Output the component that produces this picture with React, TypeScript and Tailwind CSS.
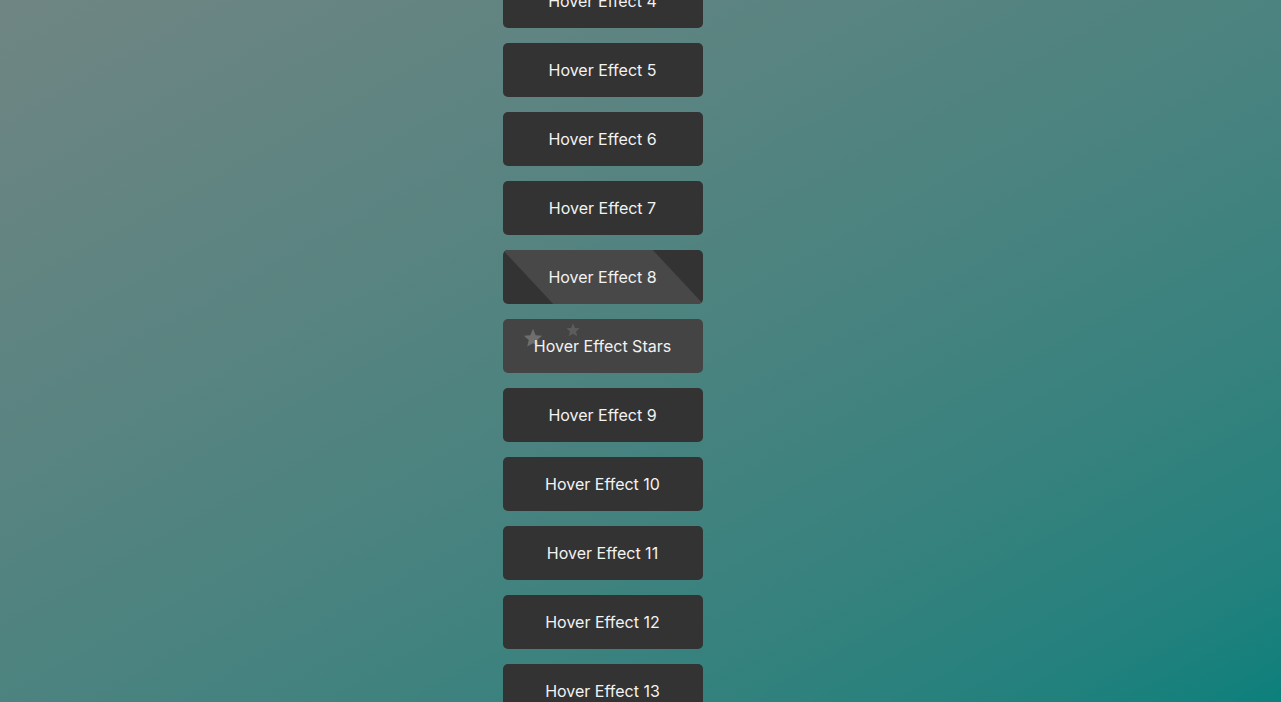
import React from 'react';

const labels = [
    'Hover Effect 4',
    'Hover Effect 5',
    'Hover Effect 6',
    'Hover Effect 7',
    'Hover Effect 8',
    'Hover Effect Stars',
    'Hover Effect 9',
    'Hover Effect 10',
    'Hover Effect 11',
    'Hover Effect 12',
    'Hover Effect 13',
];

const Star: React.FC<{ size: number; className?: string }> = ({ size, className }) => (
    <svg width={size} height={size} viewBox="0 0 24 24" className={className}>
        <path d="M12 2l2.9 6.9 7.1.6-5.4 4.7 1.7 7.1L12 17.6 5.7 21.3l1.7-7.1L2 9.5l7.1-.6z" fill="currentColor" />
    </svg>
);

const HoverButton: React.FC<{ label: string }> = ({ label }) => {
    if (label === 'Hover Effect 8') {
        return (
            <button className="relative flex h-[54px] w-[200px] items-center justify-center overflow-hidden rounded-[5px] bg-[#333333] text-[16px] text-[#f2f2f2]">
                {/* diagonal band */}
                <span className="absolute inset-y-0 left-[25px] w-[150px] skew-x-[43deg] bg-[#484848]" />
                <span className="relative">{label}</span>
            </button>
        );
    }
    if (label === 'Hover Effect Stars') {
        return (
            <button className="relative flex h-[54px] w-[200px] items-center justify-center overflow-hidden rounded-[5px] bg-[#444444] text-[16px] text-[#f2f2f2]">
                <Star size={22} className="absolute top-[8px] left-[19px] text-[#6e6e6e]" />
                <Star size={16} className="absolute top-[3px] left-[62px] text-[#5c5c5c]" />
                <span className="relative">{label}</span>
            </button>
        );
    }
    return (
        <button className="flex h-[54px] w-[200px] items-center justify-center rounded-[5px] bg-[#333333] text-[16px] text-[#f2f2f2]">
            {label}
        </button>
    );
};

export default function App() {
    return (
        <div
            className="h-[702px] overflow-hidden bg-gradient-to-br from-[#6f8583] to-[#0b807c]"
            style={{ fontFamily: 'Inter, "Open Sans", sans-serif' }}
        >
            <div className="-mt-[26px] flex flex-col items-center gap-[15px] pr-[76px]">
                {labels.map((l) => (
                    <HoverButton key={l} label={l} />
                ))}
            </div>
        </div>
    );
}
